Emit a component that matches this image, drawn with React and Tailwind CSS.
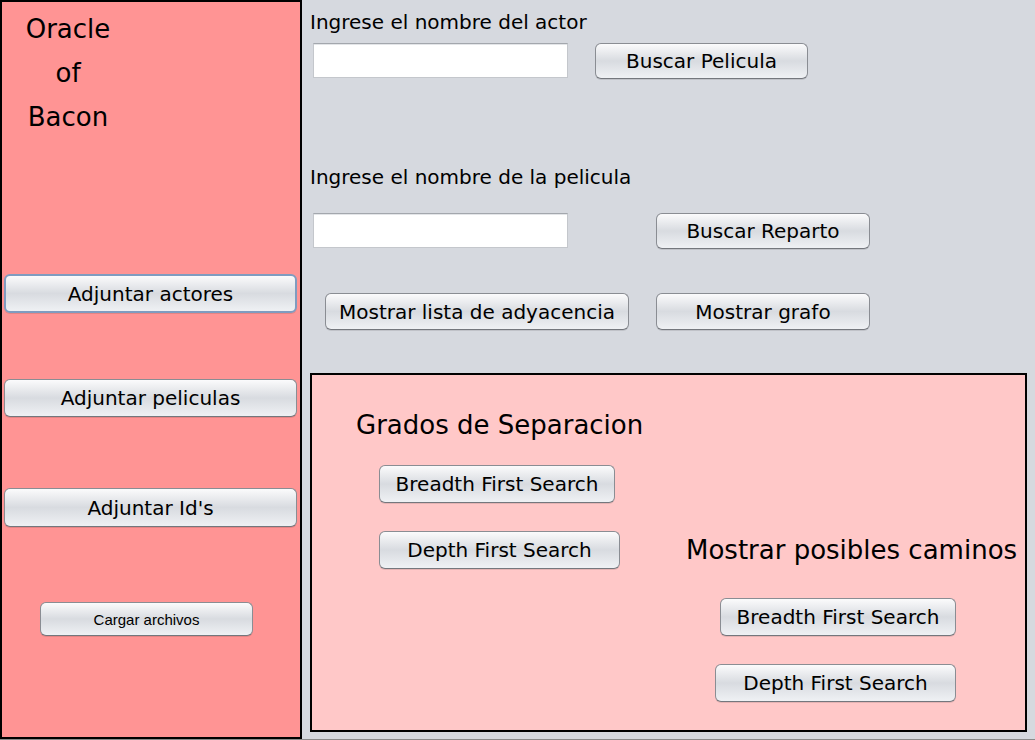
const font = { fontFamily: '"DejaVu Sans", Verdana, sans-serif' };

const btnBase =
  'flex items-center justify-center rounded-[6px] border border-[#8a8d93] border-b-[#74777d] bg-gradient-to-b from-[#fbfbfc] via-[#d8dbe0] to-[#eff1f4] text-black text-[20px] leading-none shadow-[0_1px_0_rgba(0,0,0,0.1)] whitespace-nowrap';

const Button = ({ className = '', focused = false, children }) => (
  <button className={`${btnBase} ${focused ? '!border-2 !border-[#7f9cc0]' : ''} ${className}`}>
    {children}
  </button>
);

const TextField = () => (
  <input
    type="text"
    className="h-[35px] w-[255px] bg-white border border-[#c4c7cc] border-t-[#a3a7ad] shadow-[inset_0_1px_0_#e3e5e8] outline-none"
  />
);

export default function App() {
  return (
    <div className="w-[1035px] h-[740px] flex flex-col bg-[#d6d9df] text-black" style={font}>
      <div className="flex h-[739px]">
        {/* Left panel */}
        <div className="w-[302px] h-[739px] border-2 border-black bg-[#ff9494] flex flex-col">
          <div className="w-[132px] pt-[5px] text-center text-[26px] leading-[44px]">
            <div>Oracle</div>
            <div>of</div>
            <div>Bacon</div>
          </div>
          <Button focused className="mt-[135px] ml-[2px] w-[293px] h-[39px]">
            Adjuntar actores
          </Button>
          <Button className="mt-[66px] ml-[2px] w-[293px] h-[38px]">Adjuntar peliculas</Button>
          <Button className="mt-[71px] ml-[2px] w-[293px] h-[39px]">Adjuntar Id's</Button>
          <Button className="mt-[75px] ml-[38px] w-[213px] h-[34px] !text-[15px]">
            <span style={{ fontFamily: '"Liberation Sans", Arial, sans-serif' }}>Cargar archivos</span>
          </Button>
        </div>

        {/* Right area */}
        <div className="flex-1 flex flex-col">
          <div className="mt-[10px] ml-[8px] text-[20px] leading-[24px]">Ingrese el nombre del actor</div>
          <div className="mt-[9px] ml-[11px] flex items-start gap-[27px]">
            <TextField />
            <Button className="w-[213px] h-[36px]">Buscar Pelicula</Button>
          </div>

          <div className="mt-[86px] ml-[8px] text-[20px] leading-[24px]">Ingrese el nombre de la pelicula</div>
          <div className="mt-[24px] ml-[11px] flex items-start gap-[88px]">
            <TextField />
            <Button className="w-[214px] h-[36px]">Buscar Reparto</Button>
          </div>

          <div className="mt-[44px] ml-[23px] flex items-start gap-[27px]">
            <Button className="w-[304px] h-[37px]">Mostrar lista de adyacencia</Button>
            <Button className="w-[214px] h-[37px]">Mostrar grafo</Button>
          </div>

          {/* Separation box */}
          <div className="mt-[43px] ml-[8px] w-[717px] h-[359px] border-2 border-black bg-[#ffc8c8] flex">
            <div className="w-[374px] flex flex-col">
              <div className="mt-[34px] ml-[44px] text-[26px] leading-[32px] whitespace-nowrap">
                Grados de Separacion
              </div>
              <Button className="mt-[24px] ml-[67px] w-[236px] h-[38px]">Breadth First Search</Button>
              <Button className="mt-[28px] ml-[67px] w-[241px] h-[38px]">Depth First Search</Button>
            </div>
            <div className="flex flex-col">
              <div className="mt-[159px] text-[26px] leading-[32px] whitespace-nowrap">
                Mostrar posibles caminos
              </div>
              <Button className="mt-[32px] ml-[34px] w-[236px] h-[38px]">Breadth First Search</Button>
              <Button className="mt-[28px] ml-[29px] w-[241px] h-[38px]">Depth First Search</Button>
            </div>
          </div>
        </div>
      </div>
      <div className="h-[1px] bg-[#8a8a8a]" />
    </div>
  );
}
